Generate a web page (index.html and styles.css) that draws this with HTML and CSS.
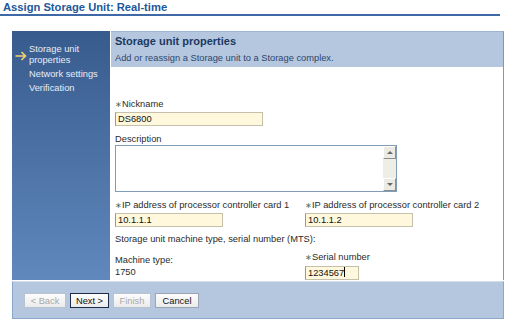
FILE: index.html
```html
<!DOCTYPE html>
<html lang="en">
<head>
	<meta charset="utf-8" />
	<title>Assign Storage Unit: Real-time</title>
	<link rel="stylesheet" href="styles.css">
</head>
<body>

<h1 class="page-title">Assign Storage Unit: Real-time</h1>

<div class="wizard">
	<div class="wizard-body">
		<ul class="steps">
			<li class="current">
				<svg class="arrow" width="12" height="10" viewBox="0 0 12 10"><path d="M0.5 5 H10.5 M6.5 1 L10.5 5 L6.5 9" fill="none" stroke="#f3d36c" stroke-width="1.6"/></svg>
				<span>Storage unit properties</span>
			</li>
			<li>Network settings</li>
			<li>Verification</li>
		</ul>

		<div class="panel">
			<div class="panel-head">
				<h2>Storage unit properties</h2>
				<p>Add or reassign a Storage unit to a Storage complex.</p>
			</div>

			<div class="panel-content">
				<label class="label req lbl-nick">Nickname</label>
				<input type="text" class="text nickname" value="DS6800" />

				<label class="label lbl-desc">Description</label>
				<div class="memo">
					<textarea></textarea>
					<div class="scroll"><span class="up"></span><span class="down"></span></div>
				</div>

				<div class="cols ip-row">
					<div>
						<label class="label req">IP address of processor controller card 1</label>
						<input type="text" class="text ip" value="10.1.1.1" />
					</div>
					<div>
						<label class="label req">IP address of processor controller card 2</label>
						<input type="text" class="text ip" value="10.1.1.2" />
					</div>
				</div>

				<p class="label mts">Storage unit machine type, serial number (MTS):</p>

				<div class="cols mts-row">
					<div class="machine">
						<p class="label">Machine type:</p>
						<p class="label">1750</p>
					</div>
					<div>
						<label class="label req">Serial number</label>
						<div class="text serial">1234567<span class="caret"></span></div>
					</div>
				</div>
			</div>
		</div>
	</div>

	<div class="wizard-foot">
		<button class="btn back" disabled>&lt; Back</button>
		<button class="btn next default">Next &gt;</button>
		<button class="btn finish" disabled>Finish</button>
		<button class="btn cancel">Cancel</button>
	</div>
</div>

</body>
</html>
```

FILE: styles.css
```css
body {
	margin: 0;
	font-family: 'Liberation Sans', Arial, sans-serif;
	font-size: 9.3px;
	color: #222;
	background: #fff;
}
p, ul, h1, h2 {
	margin: 0;
	padding: 0;
}

.page-title {
	width: 497px;
	padding-left: 3px;
	font-size: 11.2px;
	font-weight: bold;
	line-height: 14px;
	color: #22579a;
	border-bottom: 2px solid #3e68a6;
}

.wizard {
	margin: 15px 0 0 12px;
	width: 492px;
}
.wizard-body {
	display: flex;
	gap: 1px;
	height: 249px;
}

.steps {
	list-style: none;
	width: 98px;
	box-sizing: border-box;
	padding: 13px 4px 0 17px;
	background: linear-gradient(#385b8d, #6088bd);
	color: #e6edf8;
	line-height: 11px;
}
.steps li {
	margin-bottom: 3px;
}
.steps li.current {
	display: flex;
	align-items: center;
}
.arrow {
	flex: none;
	margin: 2px 2px 0 -14px;
}

.panel {
	flex: 1;
	display: flex;
	flex-direction: column;
	border-right: 1px solid #7a98c4;
	border-top: 1px solid #9cb3d4;
}
.panel-head {
	height: 36px;
	box-sizing: border-box;
	padding: 2px 0 0 4px;
	background: #b5c7df;
}
.panel-head h2 {
	font-size: 11px;
	line-height: 14px;
	color: #1b3960;
}
.panel-head p {
	margin-top: 5px;
	line-height: 11px;
	color: #2d466b;
}

.panel-content {
	flex: 1;
	padding: 31px 0 0 4px;
}
.label {
	display: block;
	line-height: 12px;
	color: #2a2a2a;
	white-space: nowrap;
}
.req::before {
	content: '\2217';
	color: #4d6b4d;
	font-size: 8px;
}
.text {
	display: block;
	box-sizing: border-box;
	height: 14px;
	margin-top: 1px;
	padding: 0 2px;
	border: 1px solid #c4c0ac;
	border-left-color: #9c9888;
	background: #fff8dc;
	font-family: inherit;
	font-size: 9.3px;
	line-height: 12px;
	color: #111;
}
.nickname {
	width: 148px;
}
.lbl-desc {
	margin-top: 7px;
}
.memo {
	display: flex;
	width: 282px;
	height: 47px;
	box-sizing: border-box;
	border: 1px solid #7f9db9;
}
.memo textarea {
	flex: 1;
	border: 0;
	resize: none;
	outline: none;
}
.scroll {
	width: 13px;
	display: flex;
	flex-direction: column;
	justify-content: space-between;
	background: #eeede6;
}
.scroll span {
	height: 13px;
	box-sizing: border-box;
	display: flex;
	align-items: center;
	justify-content: center;
	background: #ebebe4;
	border: 1px solid;
	border-color: #fff #8e8e8e #8e8e8e #fff;
}
.scroll span::after {
	content: '';
	border-left: 3px solid transparent;
	border-right: 3px solid transparent;
}
.scroll .up::after {
	border-bottom: 3px solid #666;
}
.scroll .down::after {
	border-top: 3px solid #666;
}

.cols {
	display: grid;
	grid-template-columns: 190px auto;
}
.ip-row {
	margin-top: 7px;
}
.ip-row .text {
	width: 108px;
}
.mts {
	margin-top: 6px;
}
.mts-row {
	margin-top: 6px;
}
.machine {
	padding-top: 3px;
}
.serial {
	width: 54px;
	height: 14px;
	margin-top: 2px;
}
.caret {
	display: inline-block;
	width: 1px;
	height: 10px;
	vertical-align: -1px;
	background: #000;
}

.wizard-foot {
	display: flex;
	gap: 4px;
	align-items: flex-start;
	height: 38px;
	box-sizing: border-box;
	margin-top: 1px;
	padding: 11px 0 0 11px;
	background: #b5c7df;
	border: 1px solid #8ca7cc;
	border-top-color: #d2deee;
}
.btn {
	height: 15px;
	padding: 0;
	font-family: inherit;
	font-size: 9.3px;
	color: #111;
	background: linear-gradient(#fdfdfd, #ebebeb);
	border: 1px solid #9aa4b6;
}
.btn:disabled {
	color: #a9a9a9;
	border-color: #b9c2d0;
}
.btn.default {
	border-color: #1d2b48;
}
.back { width: 42px; }
.next { width: 39px; }
.finish { width: 38px; }
.cancel { width: 44px; }
```
